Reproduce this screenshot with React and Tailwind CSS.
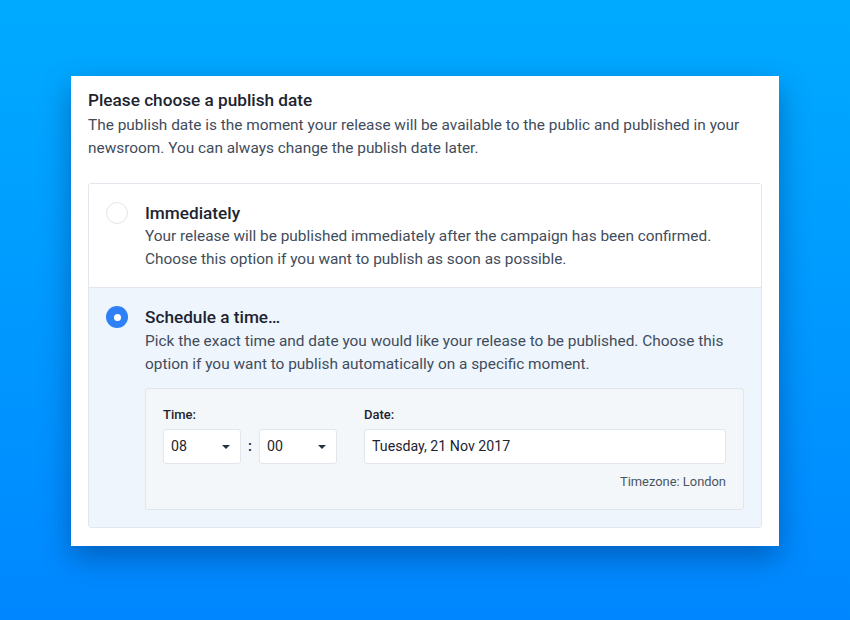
export default function App() {
  const font = { fontFamily: "Roboto, 'Liberation Sans', sans-serif" };
  return (
    <div
      className="w-[850px] h-[620px] overflow-hidden bg-gradient-to-b from-[#00abff] to-[#0087ff] pt-[76px] pl-[71px]"
      style={font}
    >
      <div className="w-[708px] h-[470px] bg-white shadow-[0_12px_28px_rgba(0,45,110,0.45)] px-[17px] pt-[13px]">
        <h1 className="text-[17.2px] leading-[22px] font-medium text-[#1d2430]">Please choose a publish date</h1>
        <p className="mt-[3px] text-[15.4px] leading-[23px] text-[#414c5b]">
          The publish date is the moment your release will be available to the public and published in your newsroom. You can always change the publish date later.
        </p>

        <div className="mt-[23px] border border-[#e2e7ed] rounded-[3px] overflow-hidden">
          {/* Option 1 */}
          <div className="flex gap-[17px] px-[17px] pt-[18px] pb-[16px] bg-white border-b border-[#e2e7ed]">
            <div className="w-[22px] h-[22px] rounded-full border-[1.5px] border-[#e2e6eb] bg-white shrink-0" />
            <div className="flex-1">
              <div className="text-[17.2px] leading-[22px] font-medium text-[#1d2430]">Immediately</div>
              <p className="mt-[1px] text-[15.4px] leading-[23px] text-[#414c5b]">
                Your release will be published immediately after the campaign has been confirmed.
                <br />
                Choose this option if you want to publish as soon as possible.
              </p>
            </div>
          </div>

          {/* Option 2 */}
          <div className="flex gap-[17px] px-[17px] pt-[18px] pb-[17px] bg-[#eef5fd]">
            <div className="w-[22px] h-[22px] rounded-full bg-[#2e80f6] flex items-center justify-center shrink-0">
              <div className="w-[7px] h-[7px] rounded-full bg-white" />
            </div>
            <div className="flex-1">
              <div className="text-[17.2px] leading-[22px] font-medium text-[#1d2430]">Schedule a time…</div>
              <p className="mt-[2px] text-[15.4px] leading-[23px] text-[#414c5b]">
                Pick the exact time and date you would like your release to be published. Choose this option if you want to publish automatically on a specific moment.
              </p>

              <div className="mt-[12px] bg-[#f4f7fa] border border-[#e1e6ec] rounded-[3px] pl-[17px] pr-[17px] pt-[18px] pb-[19px]">
                <div className="flex gap-[27px]">
                  <div>
                    <div className="text-[13px] leading-[16px] font-medium text-[#1d2430]">Time:</div>
                    <div className="mt-[6px] flex items-center">
                      <div className="w-[78px] h-[35px] bg-white border border-[#e1e6ec] rounded-[3px] flex items-center justify-between pl-[7px] pr-[10px]">
                        <span className="text-[14.2px] text-[#1d2430]">08</span>
                        <svg width="8" height="4" viewBox="0 0 8 4"><path d="M0 0 L8 0 L4 4 Z" fill="#2a323d" /></svg>
                      </div>
                      <span className="w-[18px] text-center text-[15px] font-medium text-[#1d2430]">:</span>
                      <div className="w-[78px] h-[35px] bg-white border border-[#e1e6ec] rounded-[3px] flex items-center justify-between pl-[7px] pr-[10px]">
                        <span className="text-[14.2px] text-[#1d2430]">00</span>
                        <svg width="8" height="4" viewBox="0 0 8 4"><path d="M0 0 L8 0 L4 4 Z" fill="#2a323d" /></svg>
                      </div>
                    </div>
                  </div>
                  <div className="flex-1">
                    <div className="text-[13px] leading-[16px] font-medium text-[#1d2430]">Date:</div>
                    <div className="mt-[6px] h-[35px] bg-white border border-[#e1e6ec] rounded-[3px] flex items-center pl-[7px]">
                      <span className="text-[14.2px] text-[#1d2430]">Tuesday, 21 Nov 2017</span>
                    </div>
                  </div>
                </div>
                <div className="mt-[10px] text-right text-[12.9px] leading-[16px] text-[#4a5563]">Timezone: London</div>
              </div>
            </div>
          </div>
        </div>
      </div>
    </div>
  );
}
